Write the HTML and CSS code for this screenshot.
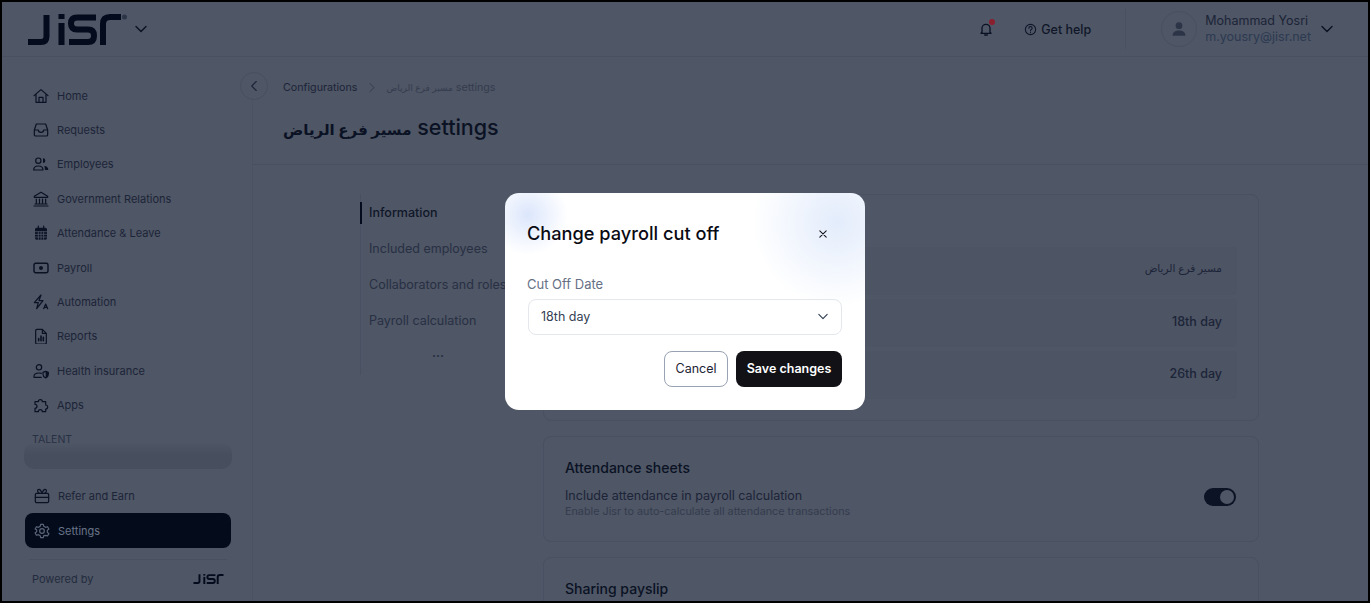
FILE: index.html
```html
<!DOCTYPE html>
<html lang="en">
<head>
    <meta charset="UTF-8">
    <meta name="viewport" content="width=device-width, initial-scale=1.0">
    <title>Payroll settings</title>
    <link rel="stylesheet" href="styles.css">
</head>
<body>
    <div class="page">
        <header class="topbar">
            <div class="brand">
                <svg class="logo" viewBox="0 0 99 31">
                    <path d="M0 28h13q5.500 0 5.500-5.500V1"/>
                    <path d="M33.500 9v22"/>
                    <path d="M33.500 0v5"/>
                    <path d="M68 3.500H49q-6 0-6 6t6 6h11q6 0 6 6.200t-6 6.300H41"/>
                    <path d="M75 31V10q0-7 7-7h11"/>
                    <circle cx="96.500" cy="3" r="2.500" fill="#2c3547" stroke="none"/>
                </svg>
                <svg class="chev" viewBox="0 0 12 8"><path d="M1 1.500l5 5 5-5"/></svg>
            </div>
            <div class="top-actions">
                <span class="bell">
                    <svg viewBox="0 0 24 24" class="ico-bell"><path d="M6 17V11a6 6 0 0 1 12 0v6l1.500 1.500h-15zM10 21h4"/></svg>
                    <i class="bell-dot"></i>
                </span>
                <a class="help">
                    <svg viewBox="0 0 24 24" class="ico-help"><circle cx="12" cy="12" r="9.500"/><path d="M9 9.500a3 3 0 1 1 4.500 2.600c-1 .6-1.500 1.200-1.500 2.400M12 17.200v.5"/></svg>
                    Get help
                </a>
                <div class="user">
                    <span class="avatar">
                        <svg viewBox="0 0 24 24"><circle cx="12" cy="7.500" r="4.500"/><path d="M3.500 21c0-5 3.500-7 8.500-7s8.500 2 8.500 7z"/></svg>
                    </span>
                    <div class="user-text">
                        <div class="user-name">Mohammad Yosri</div>
                        <div class="user-mail">m.yousry@jisr.net</div>
                    </div>
                    <svg class="chev" viewBox="0 0 12 8"><path d="M1 1.500l5 5 5-5"/></svg>
                </div>
            </div>
        </header>

        <div class="layout">
            <aside class="sidebar">
                <nav class="nav">
                    <a class="nav-item">
                        <svg viewBox="0 0 24 24"><path d="M1.500 11.500L12 2.500l10.500 9M4.500 9.500V21.500h15V9.500M9 21.500v-7.500h6v7.500"/></svg>
                        Home
                    </a>
                    <a class="nav-item">
                        <svg viewBox="0 0 24 24"><path d="M5 3h14l3 9v7a2 2 0 0 1-2 2H4a2 2 0 0 1-2-2v-7zM2 12h6c0 2 1.500 3.500 4 3.500s4-1.500 4-3.500h6"/></svg>
                        Requests
                    </a>
                    <a class="nav-item">
                        <svg viewBox="0 0 24 24"><circle cx="8" cy="7" r="4"/><path d="M1 21c0-4 3-6 7-6s7 2 7 6z"/><path class="solid" d="M15 3.500a3.500 3.500 0 0 1 0 7zM17 15c3 0 6 2 6 6h-5c0-2-.5-4-1-6z"/></svg>
                        Employees
                    </a>
                    <a class="nav-item">
                        <svg viewBox="0 0 24 24"><path d="M12 2L2 8v1.500h20V8zM5 12v7M9.700 12v7M14.300 12v7M19 12v7M3 19.500h18M1.500 22.500h21"/></svg>
                        Government Relations
                    </a>
                    <a class="nav-item">
                        <svg viewBox="0 0 24 24"><rect class="solid" x="3" y="4" width="18" height="18" rx="2.500"/><path class="cut" d="M3 10h18M3 14h18M3 18h18M8 10v12M12 10v12M16 10v12"/><path d="M8 1.500v4M16 1.500v4"/></svg>
                        Attendance &amp; Leave
                    </a>
                    <a class="nav-item">
                        <svg viewBox="0 0 24 24"><rect x="1.500" y="5" width="21" height="14" rx="2.500" stroke-width="2.200"/><circle class="solid" cx="12" cy="12" r="3"/></svg>
                        Payroll
                    </a>
                    <a class="nav-item">
                        <svg viewBox="0 0 24 24"><path d="M12 1.500L2 13h6l-2.500 9 9.500-12H9z"/><path d="M16 22l3-7 3 7M17 20h4"/></svg>
                        Automation
                    </a>
                    <a class="nav-item">
                        <svg viewBox="0 0 24 24"><path d="M4 4a2 2 0 0 1 2-2h8l6 6v14a2 2 0 0 1-2 2H6a2 2 0 0 1-2-2zM14 2v6h6"/><path d="M8.500 19v-3M12 19v-7M15.500 19v-5" stroke-width="2.400"/></svg>
                        Reports
                    </a>
                    <a class="nav-item">
                        <svg viewBox="0 0 24 24"><circle cx="9" cy="6.500" r="4"/><path d="M1.500 21v-1c0-3 3-5 7.500-5 1.500 0 2.500.2 3.500.6M1.500 21.500h11"/><path d="M15 14l4-1.500 4 1.500v3c0 3-2 4.500-4 5.500-2-1-4-2.500-4-5.500z"/><path class="solid" d="M19 12.500l4 1.500v3c0 3-2 4.500-4 5.500z"/></svg>
                        Health insurance
                    </a>
                    <a class="nav-item">
                        <svg viewBox="0 0 24 24"><path d="M3 7h5a3 3 0 1 1 6 0h5v5a3 3 0 1 1 0 6v4h-5a3 3 0 1 0-6 0H3v-5a3 3 0 1 0 0-6z"/></svg>
                        Apps
                    </a>
                </nav>
                <div class="nav-label">TALENT</div>
                <div class="nav-collapsed"></div>
                <a class="nav-item refer">
                    <svg viewBox="0 0 24 24"><rect x="2" y="8" width="20" height="14" rx="2"/><path d="M2 14h20M8 8c-4-2-3-6-.5-6S11 5 12 8c1-3 2-6 4.500-6S20 6 16 8"/></svg>
                    Refer and Earn
                </a>
                <a class="nav-item active">
                    <svg viewBox="0 0 24 24"><circle cx="12" cy="12" r="3.500"/><path d="M10 2h4l.7 3 2.600 1.500 3-.9 2 3.400-2.300 2.100v2.800l2.300 2.100-2 3.400-3-.9L14.700 19l-.7 3h-4l-.7-3-2.600-1.500-3 .9-2-3.400 2.300-2.100v-2.800L1.700 9l2-3.400 3 .9L9.300 5z"/></svg>
                    Settings
                </a>
                <div class="powered">
                    <span>Powered by</span>
                    <svg class="logo-small" viewBox="0 0 93 31">
                        <path d="M0 28h13q5.500 0 5.500-5.500V1"/>
                        <path d="M33.500 9v22"/>
                        <path d="M33.500 0v5"/>
                        <path d="M68 3.500H49q-6 0-6 6t6 6h11q6 0 6 6.200t-6 6.300H41"/>
                        <path d="M75 31V10q0-7 7-7h11"/>
                    </svg>
                </div>
            </aside>

            <main class="content">
                <div class="content-head">
                    <button class="back">
                        <svg viewBox="0 0 10 16"><path d="M8 2L2 8l6 6"/></svg>
                    </button>
                    <div class="crumbs">
                        <a class="crumb">Configurations</a>
                        <svg class="crumb-sep" viewBox="0 0 10 16"><path d="M2 2l6 6-6 6"/></svg>
                        <span class="crumb-now"><span class="ar">مسير فرع الرياض</span> settings</span>
                    </div>
                    <h1 class="page-title"><span class="ar">مسير فرع الرياض</span> settings</h1>
                </div>

                <div class="content-body">
                    <ul class="tabs">
                        <li class="tab current">Information</li>
                        <li class="tab">Included employees</li>
                        <li class="tab">Collaborators and roles</li>
                        <li class="tab">Payroll calculation</li>
                        <li class="tab-more">...</li>
                    </ul>

                    <div class="cards">
                        <section class="card card-info">
                            <div class="info-row"><span class="ar">مسير فرع الرياض</span></div>
                            <div class="info-row">18th day</div>
                            <div class="info-row">26th day</div>
                        </section>
                        <section class="card card-sheets">
                            <h3 class="card-title">Attendance sheets</h3>
                            <div class="setting">
                                <div>
                                    <div class="setting-name">Include attendance in payroll calculation</div>
                                    <div class="setting-hint">Enable Jisr to auto-calculate all attendance transactions</div>
                                </div>
                                <span class="toggle"></span>
                            </div>
                        </section>
                        <section class="card card-share">
                            <h3 class="card-title">Sharing payslip</h3>
                        </section>
                    </div>
                </div>
            </main>
        </div>

        <div class="modal">
            <div class="modal-head">
                <h2 class="modal-title">Change payroll cut off</h2>
                <svg class="modal-close" viewBox="0 0 10 10"><path d="M1 1l8 8M9 1l-8 8"/></svg>
            </div>
            <label class="field-label">Cut Off Date</label>
            <div class="select">
                <span>18th day</span>
                <svg class="select-chev" viewBox="0 0 12 8"><path d="M1 1.500l5 5 5-5"/></svg>
            </div>
            <div class="modal-actions">
                <button class="btn btn-light">Cancel</button>
                <button class="btn btn-dark">Save changes</button>
            </div>
        </div>
    </div>
</body>
</html>
```

FILE: styles.css
```css
* {
    margin: 0;
    padding: 0;
    box-sizing: border-box;
}

html, body {
    height: 100%;
    overflow: hidden;
}

body {
    font-family: Inter, "DejaVu Sans", sans-serif;
    background-color: #4f5665;
    color: #0f1729;
}

svg {
    display: block;
    fill: none;
    stroke: currentColor;
    stroke-width: 2;
    stroke-linecap: round;
    stroke-linejoin: round;
}

.page {
    position: relative;
    height: 603px;
    border: 2px solid #000;
    overflow: hidden;
    display: flex;
    flex-direction: column;
}

.ar {
    font-size: .84em;
}

/* top bar */
.topbar {
    height: 55px;
    flex-shrink: 0;
    display: flex;
    justify-content: space-between;
    align-items: center;
    padding: 0 35px 0 26px;
    border-bottom: 1px solid #485061;
}

.brand {
    display: flex;
    align-items: center;
    gap: 8px;
}

.logo {
    width: 99px;
    height: 31px;
    stroke: #030b1c;
    stroke-width: 6;
    stroke-linecap: butt;
    stroke-linejoin: miter;
}

.chev {
    width: 12px;
    height: 8px;
    color: #0a1224;
    stroke-width: 1.400;
}

.top-actions {
    display: flex;
    align-items: center;
}

.bell {
    position: relative;
    width: 16px;
    height: 16px;
    margin-right: 30px;
}

.ico-bell {
    width: 16px;
    height: 16px;
    color: #0a1224;
}

.bell-dot {
    position: absolute;
    top: -2px;
    right: -1px;
    width: 6px;
    height: 6px;
    border-radius: 50%;
    background-color: #8a1f30;
}

.help {
    display: flex;
    align-items: center;
    gap: 4px;
    font-size: 12.500px;
    font-weight: 500;
    color: #0f1729;
    padding-right: 34px;
    height: 40px;
    border-right: 1px solid #485061;
}

.ico-help {
    width: 13px;
    height: 13px;
}

.user {
    display: flex;
    align-items: center;
    margin-left: 35px;
}

.avatar {
    width: 36px;
    height: 36px;
    border: 1px solid #485061;
    border-radius: 50%;
    display: flex;
    justify-content: center;
    align-items: center;
    color: #2c3547;
}

.avatar svg {
    width: 18px;
    height: 18px;
    fill: currentColor;
    stroke: none;
}

.user-text {
    margin: 0 10px 0 8px;
    font-size: 12.500px;
    line-height: 16px;
}

.user-name {
    color: #1c2438;
}

.user-mail {
    color: #2c3a52;
}

.layout {
    flex: 1;
    display: flex;
    min-height: 0;
}

/* sidebar */
.sidebar {
    width: 250px;
    flex-shrink: 0;
    padding: 21.500px 21px 0 23px;
    display: flex;
    flex-direction: column;
}

.nav-item {
    display: flex;
    align-items: center;
    gap: 8px;
    height: 34.400px;
    padding-left: 8px;
    font-size: 11px;
    color: #1c2438;
}

.nav-item svg {
    width: 16px;
    height: 16px;
    color: #0a1224;
    stroke-width: 1.800;
}

.nav-item svg .solid {
    fill: currentColor;
    stroke: none;
}

.nav-item svg .cut {
    stroke: #4f5665;
    stroke-width: 1.200;
}

.nav-label {
    margin: 13px 0 0 7px;
    font-size: 10.500px;
    line-height: 10px;
    color: #283044;
}

.nav-collapsed {
    width: 208px;
    height: 26px;
    margin: -2px 0 0 -1px;
    border-radius: 10px;
    background: linear-gradient(#4e5564, #474e5e 45%);
}

.refer {
    height: 34px;
    margin-top: 10px;
    padding-left: 9px;
    width: 206px;
}

.active {
    height: 35px;
    width: 206px;
    padding-left: 9px;
    border-radius: 8px;
    background-color: #040c1c;
    color: #6a7488;
}

.active svg {
    color: #5b6579;
}

.powered {
    margin-top: 11px;
    width: 198px;
    margin-left: 4px;
    padding: 12px 3px 0 3px;
    border-top: 1px solid #485061;
    display: flex;
    justify-content: space-between;
    align-items: center;
    font-size: 11px;
    color: #232b3e;
}

.logo-small {
    width: 31px;
    height: 10px;
    stroke: #030b1c;
    stroke-width: 6;
    stroke-linecap: butt;
    stroke-linejoin: miter;
}

/* main */
.content {
    flex: 1;
    min-width: 0;
    display: flex;
    flex-direction: column;
    border-left: 1px solid #4b5262;
    margin-top: 14px;
}

.content-head {
    position: relative;
    height: 101px;
    padding: 9px 0 0 30px;
    border-bottom: 1px solid #485061;
}

.back {
    position: absolute;
    left: -13px;
    top: 1px;
    width: 28px;
    height: 28px;
    border: 1px solid #485061;
    border-radius: 50%;
    background-color: #4f5665;
    color: #1c2438;
    display: flex;
    justify-content: center;
    align-items: center;
}

.back svg {
    width: 8px;
    height: 12px;
    stroke-width: 1.500;
}

.crumbs {
    display: flex;
    align-items: center;
    font-size: 10.700px;
    height: 14px;
}

.crumb {
    color: #1c2438;
}

.crumb-sep {
    width: 8px;
    height: 11px;
    margin: 0 10px 0 11px;
    color: #343c4e;
    stroke-width: 1.400;
}

.crumb-now {
    color: #343c4e;
}

.page-title {
    margin-top: 19px;
    font-size: 21.500px;
    line-height: 28px;
    font-weight: 500;
    color: #0a1224;
}

.page-title .ar {
    font-size: .7em;
    font-weight: 700;
}

.content-body {
    display: flex;
    padding: 29px 0 0 107px;
    min-height: 0;
}

.tabs {
    list-style: none;
    width: 183px;
    height: 181px;
    flex-shrink: 0;
    padding-top: 2px;
    border-left: 1px solid #485061;
}

.tab {
    position: relative;
    height: 36px;
    line-height: 34px;
    padding-left: 8px;
    font-size: 12.500px;
    white-space: nowrap;
    color: #283044;
}

.tab.current {
    color: #0f1729;
    font-weight: 500;
}

.tab.current::before {
    content: "";
    position: absolute;
    left: -1px;
    top: 6px;
    width: 2px;
    height: 22px;
    background-color: #030b1c;
}

.tab-more {
    text-align: center;
    width: 154px;
    margin-top: 7px;
    font-size: 12px;
    font-weight: 700;
    line-height: 12px;
    color: #283044;
}

.cards {
    width: 716px;
    display: flex;
    flex-direction: column;
    gap: 15px;
}

.card {
    border: 1px solid #485061;
    border-radius: 8px;
    padding: 0 21px;
    flex-shrink: 0;
}

.card-info {
    height: 227px;
    padding-top: 52px;
    display: flex;
    flex-direction: column;
    gap: 4px;
}

.info-row {
    height: 48px;
    line-height: 46px;
    padding-right: 15px;
    text-align: right;
    font-size: 12.500px;
    font-weight: 500;
    color: #1c2438;
    background-color: #4d5464;
    border-radius: 4px;
}

.info-row:first-child {
    line-height: 42px;
}

.card-sheets {
    height: 106px;
    padding-top: 22px;
}

.card-share {
    height: 80px;
    padding-top: 22px;
}

.card-title {
    font-size: 14px;
    line-height: 17px;
    font-weight: 500;
    color: #0a1224;
}

.setting {
    margin-top: 12px;
    display: flex;
    justify-content: space-between;
    align-items: flex-start;
}

.setting-name {
    font-size: 12.500px;
    line-height: 16px;
    color: #1c2438;
}

.setting-hint {
    font-size: 10.800px;
    line-height: 14px;
    margin-top: 1px;
    color: #343c4e;
}

.toggle {
    position: relative;
    width: 32px;
    height: 18px;
    margin-right: 1px;
    border-radius: 9px;
    background-color: #0b1324;
}

.toggle::after {
    content: "";
    position: absolute;
    right: 2px;
    top: 2px;
    width: 14px;
    height: 14px;
    border-radius: 50%;
    background-color: #4f5665;
}

/* modal */
.modal {
    position: absolute;
    left: 503px;
    top: 191px;
    width: 360px;
    height: 217px;
    padding: 0 23px 0 23px;
    border-radius: 14px;
    background:
        radial-gradient(circle at 23px 22px, rgba(205, 220, 250, .7), rgba(255, 255, 255, 0) 40px),
        radial-gradient(ellipse 85px 85px at 332px 29px, rgba(215, 228, 250, .7), rgba(255, 255, 255, 0)),
        #fff;
}

.modal-head {
    display: flex;
    justify-content: space-between;
    align-items: center;
    height: 40px;
    margin-top: 20px;
}

.modal-title {
    margin-left: -1px;
    font-size: 18.200px;
    font-weight: 500;
    color: #0a0a14;
}

.modal-close {
    width: 8px;
    height: 8px;
    margin: 1px 15px 0 0;
    color: #101018;
    stroke-width: 1.300;
}

.field-label {
    display: block;
    margin: 23px 0 0 -1px;
    font-size: 13px;
    line-height: 16px;
    color: #667085;
}

.select {
    margin-top: 7px;
    height: 36px;
    display: flex;
    justify-content: space-between;
    align-items: center;
    padding: 0 13px 2px 12px;
    border: 1px solid #e4e7ec;
    border-radius: 8px;
    font-size: 12.500px;
    color: #344054;
}

.select-chev {
    width: 10px;
    height: 7px;
    color: #344054;
    stroke-width: 1.400;
}

.modal-actions {
    display: flex;
    justify-content: flex-end;
    gap: 8px;
    margin-top: 16px;
}

.btn {
    height: 36px;
    padding-bottom: 2px;
    border-radius: 8px;
    font-family: inherit;
    font-size: 12.500px;
    cursor: pointer;
}

.btn-light {
    width: 64px;
    background-color: #fff;
    border: 1px solid #98a2b3;
    color: #1d2433;
}

.btn-dark {
    width: 106px;
    background-color: #111116;
    border: 0;
    color: #fff;
    font-weight: 600;
}
```
